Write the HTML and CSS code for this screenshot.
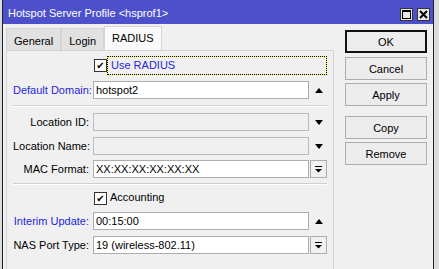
FILE: index.html
```html
<!DOCTYPE html>
<html lang="en">
<head>
  <meta charset="UTF-8" />
  <title>Hotspot Server Profile</title>
  <link rel="stylesheet" href="styles.css">
</head>
<body>

  <div class="window">
    <div class="titlebar">
      <span class="title">Hotspot Server Profile &lt;hsprof1&gt;</span>
      <div class="title-buttons">
        <span class="tbtn">
          <svg width="9" height="9" viewBox="0 0 9 9"><rect x="0.5" y="0.5" width="8" height="8" fill="none" stroke="#000"/><line x1="0" y1="1.5" x2="9" y2="1.5" stroke="#000"/></svg>
        </span>
        <span class="tbtn">
          <svg width="9" height="9" viewBox="0 0 9 9"><path d="M1 1 L8 8 M8 1 L1 8" stroke="#000" stroke-width="2"/></svg>
        </span>
      </div>
    </div>

    <div class="content">
      <div class="left">
        <div class="tabs">
          <div class="tab">General</div>
          <div class="tab">Login</div>
          <div class="tab active">RADIUS</div>
        </div>

        <div class="panel">
          <div class="row check-row first">
            <span class="label"></span>
            <span class="checkbox">✔</span>
            <span class="check-label focus blue">Use RADIUS</span>
          </div>

          <div class="row gap6">
            <span class="label blue">Default Domain:</span>
            <span class="input">hotspot2</span>
            <span class="side"><span class="arrow-up"></span></span>
          </div>

          <div class="sep gap6"></div>

          <div class="row gap6">
            <span class="label">Location ID:</span>
            <span class="input disabled"></span>
            <span class="side"><span class="arrow-down"></span></span>
          </div>

          <div class="row gap6">
            <span class="label">Location Name:</span>
            <span class="input disabled"></span>
            <span class="side"><span class="arrow-down"></span></span>
          </div>

          <div class="row gap5">
            <span class="label">MAC Format:</span>
            <span class="input">XX:XX:XX:XX:XX:XX</span>
            <span class="side drop">
              <svg width="9" height="9" viewBox="0 0 9 9"><rect x="1" y="1" width="7" height="1" fill="#000"/><path d="M1 4 H8 L4.5 7.5 Z" fill="#000"/></svg>
            </span>
          </div>

          <div class="sep gap5"></div>

          <div class="row check-row gap4">
            <span class="label"></span>
            <span class="checkbox">✔</span>
            <span class="check-label">Accounting</span>
          </div>

          <div class="row gap4">
            <span class="label blue">Interim Update:</span>
            <span class="input">00:15:00</span>
            <span class="side"><span class="arrow-up"></span></span>
          </div>

          <div class="row gap6">
            <span class="label">NAS Port Type:</span>
            <span class="input">19 (wireless-802.11)</span>
            <span class="side drop">
              <svg width="9" height="9" viewBox="0 0 9 9"><rect x="1" y="1" width="7" height="1" fill="#000"/><path d="M1 4 H8 L4.5 7.5 Z" fill="#000"/></svg>
            </span>
          </div>
        </div>
      </div>

      <div class="right">
        <button class="btn default">OK</button>
        <button class="btn">Cancel</button>
        <button class="btn">Apply</button>
        <button class="btn spaced">Copy</button>
        <button class="btn">Remove</button>
      </div>
    </div>
  </div>

</body>
</html>
```

FILE: styles.css
```css
:root {
  --bg: #f0f0f0;
  --title: #4c51cb;
  --blue: #1f1fe0;
  --border: #adadad;
}

* {
  margin: 0; padding: 0; box-sizing: border-box;
  font-family: 'Liberation Sans', Arial, sans-serif;
  font-size: 11px;
}

body {
  background-color: #dcdcdc;
  height: 100vh;
  overflow: hidden;
}

.window {
  margin-left: 2px;
  width: 432px;
  height: 100vh;
  background-color: var(--bg);
  border-left: 1px solid #222;
  border-right: 1px solid #222;
  display: flex;
  flex-direction: column;
}

.titlebar {
  height: 24px;
  background-color: var(--title);
  display: flex;
  align-items: center;
  padding-left: 5px;
  flex-shrink: 0;
}

.title {
  color: #fff;
  flex: 1;
  padding-top: 2px;
}

.title-buttons {
  display: flex;
  gap: 4px;
  padding-right: 3px;
  padding-top: 4px;
}

.tbtn {
  width: 13px;
  height: 13px;
  background-color: #e8e8e8;
  border: 1px solid #333;
  display: flex;
  align-items: center;
  justify-content: center;
}

.content {
  display: flex;
  flex: 1;
}

.left {
  width: 331px;
  padding-left: 3px;
  display: flex;
  flex-direction: column;
}

.tabs {
  display: flex;
  height: 26px;
  align-items: flex-end;
  padding-top: 2px;
}

.tab {
  height: 22px;
  padding: 2px 7px 0;
  background-color: #e1e1e1;
  border: 1px solid #d4d4d4;
  border-bottom: none;
  display: flex;
  align-items: center;
}

.tab.active {
  height: 24px;
  background-color: #f9f9f9;
  padding: 0 7px 2px;
}

.panel {
  flex: 1;
  border: 1px solid #d4d4d4;
  border-bottom: none;
  background-color: var(--bg);
  padding: 5px 6px 0;
  display: flex;
  flex-direction: column;
}

.row {
  display: flex;
  align-items: center;
  height: 18px;
}

.check-row {
  height: 19px;
}

.first { margin-top: 0; }
.gap4 { margin-top: 4px; }
.gap5 { margin-top: 5px; }
.gap6 { margin-top: 6px; }

.sep {
  height: 2px;
  border-top: 1px solid #cfcfcf;
  border-bottom: 1px solid #fff;
}

.label {
  width: 80px;
  text-align: right;
  padding-right: 4px;
  color: #000;
  white-space: nowrap;
}

.blue { color: var(--blue); }

.input {
  width: 216px;
  height: 18px;
  background-color: #fff;
  border: 1px solid var(--border);
  padding: 0 2px;
  line-height: 16px;
}

.input.disabled {
  background-color: var(--bg);
  border-color: #bcbcbc;
}

.side {
  width: 17px;
  height: 18px;
  margin-left: 1px;
  display: flex;
  align-items: center;
  justify-content: center;
}

.side.drop {
  border: 1px solid var(--border);
}

.arrow-up {
  width: 0; height: 0;
  border-left: 4px solid transparent;
  border-right: 4px solid transparent;
  border-bottom: 5px solid #000;
}

.arrow-down {
  width: 0; height: 0;
  border-left: 4px solid transparent;
  border-right: 4px solid transparent;
  border-top: 5px solid #000;
}

.checkbox {
  width: 13px;
  height: 13px;
  margin-left: 1px;
  background-color: #fff;
  border: 1px solid #333;
  font-size: 10px;
  font-weight: bold;
  line-height: 11px;
  text-align: center;
  font-family: 'DejaVu Sans', sans-serif;
}

.check-label {
  height: 19px;
  padding-left: 3px;
  line-height: 17px;
}

.focus {
  flex: 1;
  border: 1px solid #ffff00;
  outline: 1px dotted #000;
  outline-offset: -1px;
}

.right {
  flex: 1;
  display: flex;
  flex-direction: column;
  padding: 6px 0 0 11px;
}

.btn {
  width: 82px;
  height: 23px;
  background-color: #ececec;
  border: 1px solid var(--border);
  color: #000;
  margin-bottom: 3px;
}

.btn.default {
  border: 2px solid #111;
  margin-bottom: 4px;
}

.btn.spaced {
  margin-top: 7px;
}
```
